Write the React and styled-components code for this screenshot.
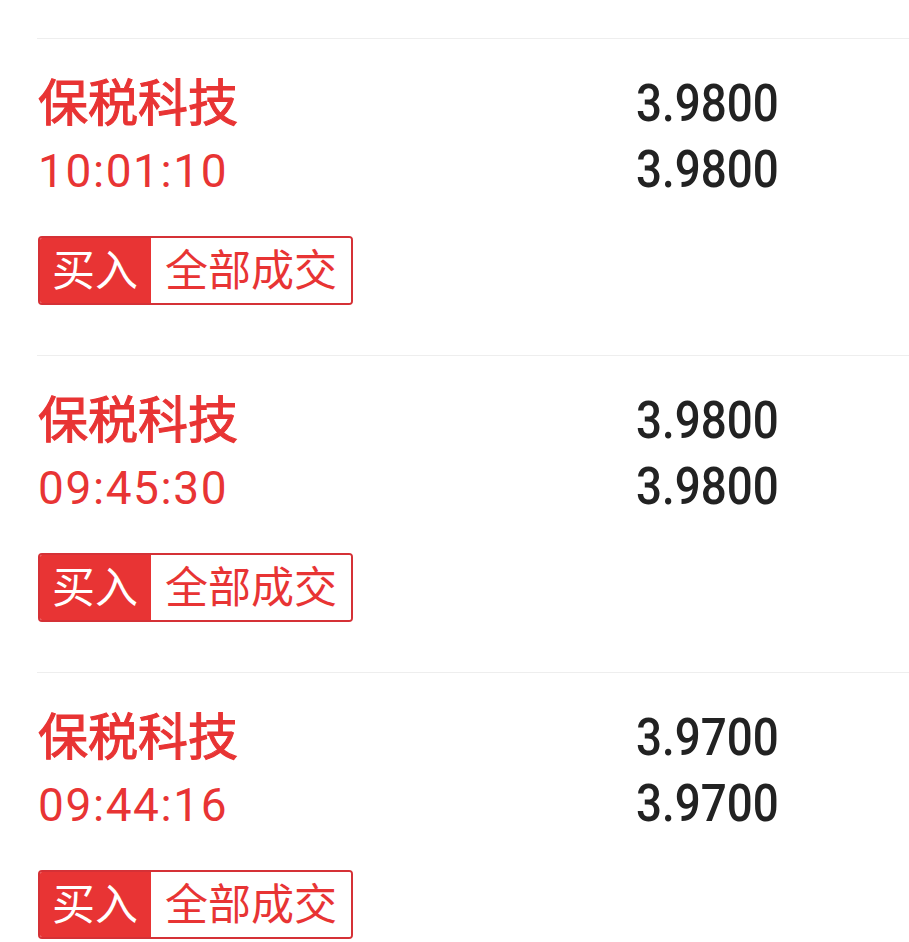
import React from "react";
import styled, { createGlobalStyle } from "styled-components";

const GlobalStyle = createGlobalStyle`
  html, body {
    margin: 0;
    padding: 0;
    background: #fff;
  }
  body {
    font-family: Roboto, "Noto Sans CJK SC", sans-serif;
  }
`;

const RED = "#e83434";

const trades = [
  { name: "保税科技", time: "10:01:10", price: "3.9800", dealPrice: "3.9800", side: "买入", status: "全部成交" },
  { name: "保税科技", time: "09:45:30", price: "3.9800", dealPrice: "3.9800", side: "买入", status: "全部成交" },
  { name: "保税科技", time: "09:44:16", price: "3.9700", dealPrice: "3.9700", side: "买入", status: "全部成交" },
];

const List = styled.div`
  padding-top: 38px;
  height: 942px;
  overflow: hidden;
  box-sizing: border-box;
`;

const Item = styled.div`
  margin-left: 37px;
  border-top: 1px solid #eeeeee;
  padding: 26px 0 50px 1px;
`;

const Row = styled.div`
  display: grid;
  grid-template-columns: 598px auto;
  align-items: baseline;
  height: ${(p) => p.$h}px;
`;

const Name = styled.div`
  font-family: "Noto Sans CJK SC", sans-serif;
  font-size: 50px;
  font-weight: 400;
  -webkit-text-stroke: 1.1px ${RED};
  color: ${RED};
  line-height: 68px;
`;

const Time = styled.div`
  font-family: Roboto, sans-serif;
  font-size: 46px;
  font-weight: 400;
  letter-spacing: 1.6px;
  color: ${RED};
  line-height: 68px;
`;

const Price = styled.div`
  font-family: Roboto, sans-serif;
  font-size: 52px;
  font-weight: 500;
  color: #222;
  line-height: 68px;
  transform: scaleX(0.88);
  transform-origin: left center;
`;

const Badge = styled.div`
  display: inline-flex;
  margin-top: 35px;
  border: 2px solid #d53136;
  border-radius: 4px;
  overflow: hidden;
  font-family: "Noto Sans CJK SC", sans-serif;
  font-size: 43px;
  line-height: 59px;
`;

const Tag = styled.span`
  padding: ${(p) => (p.$filled ? "0 13px 6px 12px" : "0 14px 6px 14px")};
  background: ${(p) => (p.$filled ? RED : "#fff")};
  color: ${(p) => (p.$filled ? "#fff" : RED)};
`;

function TradeItem({ trade }) {
  return (
    <Item>
      <Row $h={71}>
        <Name>{trade.name}</Name>
        <Price>{trade.price}</Price>
      </Row>
      <Row $h={65}>
        <Time>{trade.time}</Time>
        <Price>{trade.dealPrice}</Price>
      </Row>
      <Badge>
        <Tag $filled>{trade.side}</Tag>
        <Tag>{trade.status}</Tag>
      </Badge>
    </Item>
  );
}

export default function App() {
  return (
    <>
      <GlobalStyle />
      <List>
        {trades.map((t, i) => (
          <TradeItem key={i} trade={t} />
        ))}
      </List>
    </>
  );
}
